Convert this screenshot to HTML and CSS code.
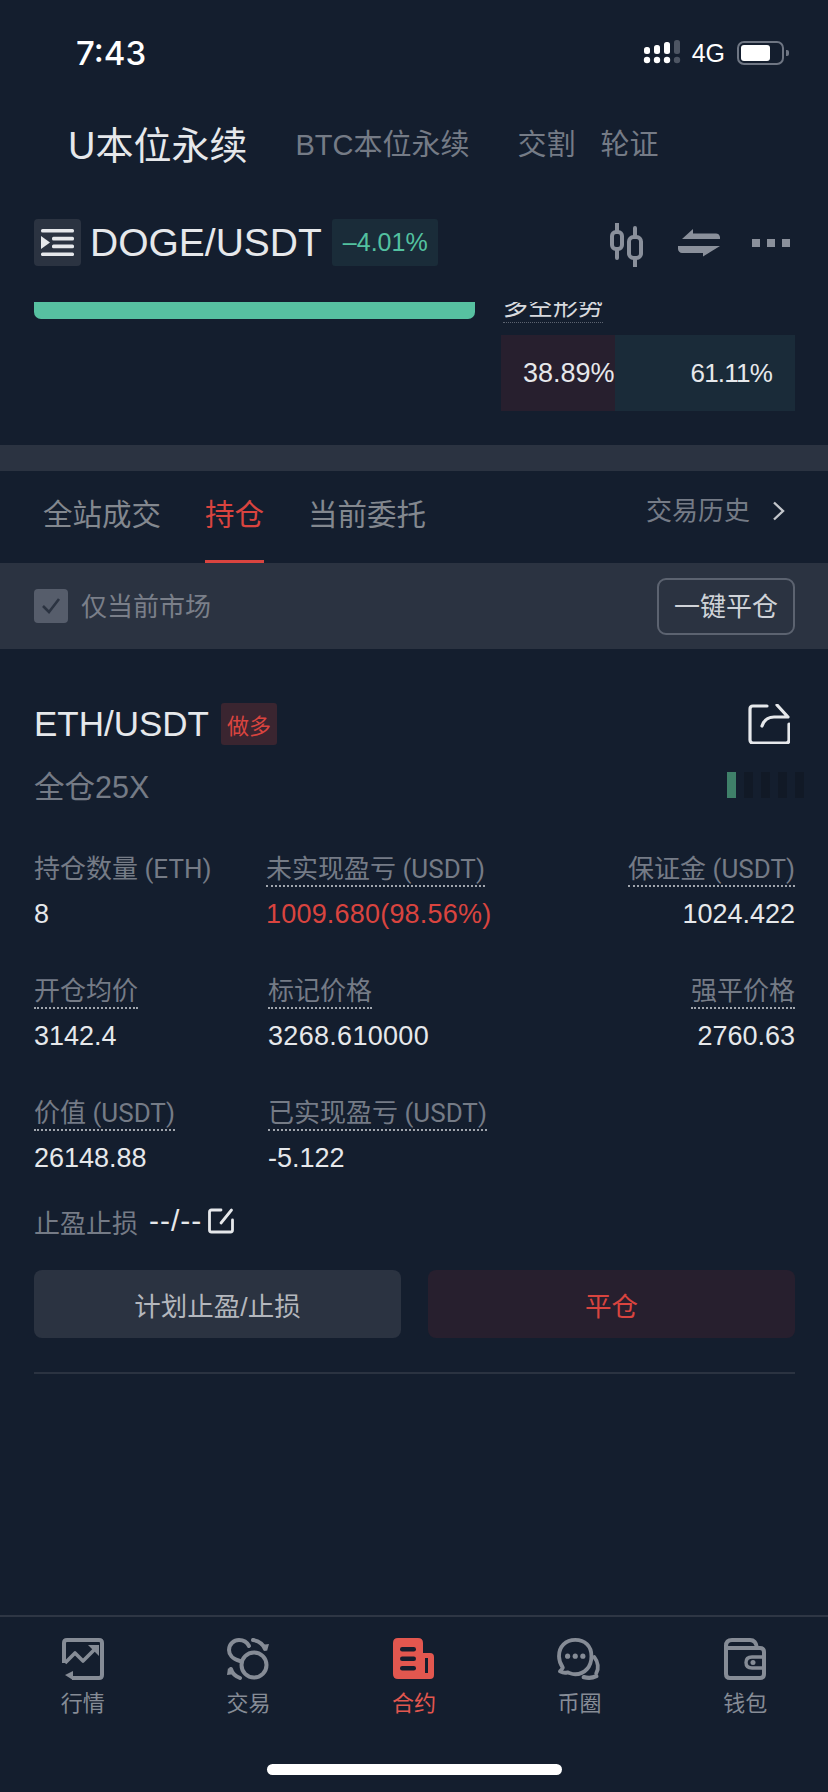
FILE: index.html
```html
<!DOCTYPE html>
<html lang="zh-CN">
<head>
    <meta charset="UTF-8">
    <meta name="viewport" content="width=device-width, initial-scale=1.0">
    <title>合约</title>
    <link rel="stylesheet" href="styles.css">
</head>
<body>
    <div class="page">
        <div class="status-bar">
            <span class="time">7:43</span>
            <div class="status-right">
                <svg class="signal" width="40" height="26" viewBox="0 0 40 26">
                    <g fill="#fff">
                        <circle cx="4" cy="20" r="3.2"/><circle cx="14" cy="20" r="3.2"/><circle cx="24" cy="20" r="3.2"/>
                        <rect x="1" y="7" width="6" height="7" rx="2.5"/><rect x="11" y="5" width="6" height="9" rx="2.5"/><rect x="21" y="2" width="6" height="12" rx="2.5"/>
                    </g>
                    <g fill="#4d5563">
                        <circle cx="34" cy="20" r="3.2"/><rect x="31" y="0" width="6" height="14" rx="2.5"/>
                    </g>
                </svg>
                <span class="network">4G</span>
                <div class="battery"><div class="battery-fill"></div></div>
                <div class="battery-nub"></div>
            </div>
        </div>

        <div class="market-tabs">
            <span class="market-tab active">U本位永续</span>
            <span class="market-tab btc">BTC本位永续</span>
            <span class="market-tab delivery">交割</span>
            <span class="market-tab option">轮证</span>
        </div>

        <div class="pair-row">
            <div class="menu-box">
                <svg width="33" height="27" viewBox="0 0 33 27" fill="#e6e8eb">
                    <rect x="0" y="0" width="33" height="3.6" rx="1.5"/>
                    <rect x="11" y="7.8" width="22" height="3.6" rx="1.5"/>
                    <rect x="11" y="15.6" width="22" height="3.6" rx="1.5"/>
                    <rect x="0" y="23.4" width="33" height="3.6" rx="1.5"/>
                    <path d="M0 7l9 6.5L0 20z"/>
                </svg>
            </div>
            <span class="pair-name">DOGE/USDT</span>
            <span class="pair-change">–4.01%</span>
            <div class="pair-actions">
                <svg class="candles" width="34" height="44" viewBox="0 0 34 44" fill="none" stroke="#8a909b" stroke-width="4">
                    <path d="M7 0v9M7 26v9M25 5v9M25 35v9" stroke-linecap="round"/>
                    <rect x="2" y="9" width="10" height="17" rx="4"/>
                    <rect x="19" y="14" width="12" height="21" rx="4.5"/>
                </svg>
                <svg class="swap" width="42" height="28" viewBox="0 0 42 28" fill="#8a909b">
                    <path d="M15 0v4.500h23c2 0 3.500 1 4 3.500v2H4z"/>
                    <path d="M0 17h42L25 27.500V24H4c-2 0-4-2-4-4z"/>
                </svg>
                <div class="dots"><i></i><i></i><i></i></div>
            </div>
        </div>

        <div class="depth">
            <div class="depth-bar"></div>
            <div class="sentiment">
                <div class="sentiment-title"><span>多空形势</span></div>
                <div class="ratio">
                    <div class="ratio-long">38.89%</div>
                    <div class="ratio-short">61.11%</div>
                </div>
            </div>
        </div>

        <div class="band"></div>

        <div class="record-tabs">
            <span class="record-tab">全站成交</span>
            <span class="record-tab active">持仓</span>
            <span class="record-tab">当前委托</span>
            <div class="history">
                <span>交易历史</span>
                <svg width="13" height="20" viewBox="0 0 13 20" fill="none" stroke="#c3c6cb" stroke-width="2.4"><path d="M2 1.500l9 8.500-9 8.500"/></svg>
            </div>
        </div>

        <div class="filter-bar">
            <div class="check-box">
                <svg width="20" height="18" viewBox="0 0 20 18" fill="none" stroke="#2b3341" stroke-width="2.6"><path d="M2 9l6 6L18 2"/></svg>
            </div>
            <span class="filter-label">仅当前市场</span>
            <button class="close-all">一键平仓</button>
        </div>

        <div class="position">
            <div class="pos-head">
                <span class="pos-name">ETH/USDT</span>
                <span class="pos-tag">做多</span>
                <svg class="share" width="42" height="40" viewBox="0 0 42 40" fill="none" stroke="#e6e8eb" stroke-width="3.2" stroke-linejoin="round" stroke-linecap="round">
                    <path d="M19 2H5Q2 2 2 5v31q0 3 3 3h33q3 0 3-3V20"/>
                    <path d="M29 1l11 12H26q-9 0-12 9"/>
                </svg>
            </div>
            <div class="pos-meta">
                <span class="leverage">全仓25X</span>
                <div class="risk-bars"><i class="on"></i><i></i><i></i><i></i><i></i></div>
            </div>

            <div class="pos-grid">
                <div class="cell">
                    <span class="cell-label plain">持仓数量 (ETH)</span>
                    <span class="cell-value">8</span>
                </div>
                <div class="cell">
                    <span class="cell-label">未实现盈亏 (USDT)</span>
                    <span class="cell-value red">1009.680(98.56%)</span>
                </div>
                <div class="cell right">
                    <span class="cell-label">保证金 (USDT)</span>
                    <span class="cell-value">1024.422</span>
                </div>
                <div class="cell">
                    <span class="cell-label">开仓均价</span>
                    <span class="cell-value">3142.4</span>
                </div>
                <div class="cell nudge">
                    <span class="cell-label">标记价格</span>
                    <span class="cell-value wide">3268.610000</span>
                </div>
                <div class="cell right">
                    <span class="cell-label">强平价格</span>
                    <span class="cell-value">2760.63</span>
                </div>
                <div class="cell">
                    <span class="cell-label">价值 (USDT)</span>
                    <span class="cell-value">26148.88</span>
                </div>
                <div class="cell nudge">
                    <span class="cell-label">已实现盈亏 (USDT)</span>
                    <span class="cell-value">-5.122</span>
                </div>
            </div>

            <div class="stop-row">
                <span class="stop-label">止盈止损</span>
                <span class="stop-value">--/--</span>
                <svg width="26" height="26" viewBox="0 0 26 26" fill="none" stroke="#e6e8eb" stroke-width="2.800" stroke-linecap="round" stroke-linejoin="round">
                    <path d="M13 2H3.500Q1.500 2 1.500 4v18q0 2 2 2h19q2 0 2-2V12"/>
                    <path d="M23.500 2L13 15"/>
                </svg>
            </div>

            <div class="pos-buttons">
                <button class="btn-plan">计划止盈/止损</button>
                <button class="btn-close">平仓</button>
            </div>
            <div class="pos-line"></div>
        </div>

        <div class="tab-bar">
            <div class="tab-items">
                <div class="tab-item">
                    <svg width="42" height="42" viewBox="0 0 42 42" fill="none" stroke="#868c96" stroke-width="4" stroke-linejoin="round">
                        <path d="M2 25V5q0-3 3-3h32q3 0 3 3v32q0 3-3 3H10"/>
                        <path d="M3 25l10-10 8 8 13-13" stroke-width="3.600"/>
                        <path d="M26 7h11v11z" fill="#868c96" stroke="none"/>
                        <path d="M11 33l-8 4 8 5z" fill="#868c96" stroke="none"/>
                    </svg>
                    <span>行情</span>
                </div>
                <div class="tab-item">
                    <svg width="44" height="42" viewBox="0 0 44 42" fill="none" stroke="#868c96" stroke-width="4" stroke-linecap="round">
                        <circle cx="28" cy="27" r="12.500"/>
                        <path d="M14 23C6 21 3 16 3 12 3 6 8 2 13 2c5 0 8 2 10 6"/>
                        <path d="M27 2c6 1 10 4 12 9"/>
                        <path d="M35 7l6 6 2-7z" fill="#868c96" stroke="none"/>
                        <path d="M14 40c-5-2-8-5-9-9"/>
                        <path d="M9 36l-7-6-1 7z" fill="#868c96" stroke="none"/>
                    </svg>
                    <span>交易</span>
                </div>
                <div class="tab-item active">
                    <svg width="42" height="42" viewBox="0 0 42 42">
                        <path fill="#e2574f" d="M5 0h20q5 0 5 5v10h7q4 0 4 4v18q0 4-4 4H5q-5 0-5-5V5q0-5 5-5z"/>
                        <g fill="#141e2e">
                            <rect x="7" y="9" width="16" height="4.500" rx="2.200"/>
                            <rect x="7" y="18.500" width="16" height="4.500" rx="2.200"/>
                            <rect x="7" y="28" width="16" height="4.500" rx="2.200"/>
                            <rect x="32" y="20" width="3" height="15"/>
                        </g>
                    </svg>
                    <span>合约</span>
                </div>
                <div class="tab-item">
                    <svg width="48" height="44" viewBox="0 0 48 44" fill="none" stroke="#868c96" stroke-width="4" stroke-linecap="round" stroke-linejoin="round">
                        <path d="M19 2C9 2 2 9 2 19c0 5 2 9 4 12-1 2-2 3-3 4 2 1 5 2 8 1 3 1 5 2 8 2 10 0 17-8 17-19S29 2 19 2z"/>
                        <path d="M39 20c4 5 5 12 2 17"/>
                        <path d="M28 41c4 1 9 1 13-1" stroke-width="4.500"/>
                        <g fill="#868c96" stroke="none"><circle cx="11" cy="19" r="2.700"/><circle cx="19" cy="19" r="2.700"/><circle cx="27" cy="19" r="2.700"/></g>
                    </svg>
                    <span>币圈</span>
                </div>
                <div class="tab-item">
                    <svg width="42" height="42" viewBox="0 0 42 42" fill="none" stroke="#868c96" stroke-width="4" stroke-linejoin="round">
                        <path d="M2 8q0-6 6-6h18q6 0 7 8"/>
                        <path d="M2 8v28q0 4 4 4h30q4 0 4-4V14q0-4-4-4H6q-4 0-4-2"/>
                        <path d="M40 19H28q-6 0-6 5.500T28 30h12" stroke-width="3.400"/>
                        <circle cx="29" cy="24.500" r="2.500" fill="#868c96" stroke="none"/>
                    </svg>
                    <span>钱包</span>
                </div>
            </div>
            <div class="home-bar"></div>
        </div>
    </div>
</body>
</html>
```

FILE: styles.css
```css
* {
    box-sizing: border-box;
}

body {
    margin: 0;
    background-color: #141e2e;
    font-family: "Liberation Sans", "Noto Sans CJK SC", sans-serif;
    color: #e6e8eb;
}

.page {
    display: flex;
    flex-direction: column;
    width: 828px;
    height: 1792px;
    overflow: hidden;
}

/* status bar */
.status-bar {
    display: flex;
    justify-content: space-between;
    align-items: center;
    height: 106px;
    padding: 0 39px 0 76px;
}

.time {
    font-family: Inter, sans-serif;
    font-size: 33px;
    font-weight: 500;
    color: #fff;
}

.status-right {
    display: flex;
    align-items: center;
}

.signal {
    margin-right: 9px;
}

.network {
    font-size: 25px;
    color: #fff;
    margin-right: 12px;
}

.battery {
    width: 47px;
    height: 24px;
    padding: 2px;
    border: 2px solid #6f7683;
    border-radius: 7px;
}

.battery-fill {
    width: 29px;
    height: 16px;
    background-color: #fff;
    border-radius: 3px;
}

.battery-nub {
    width: 3px;
    height: 6px;
    margin-left: 2px;
    background-color: #6f7683;
    border-radius: 0 2px 2px 0;
}

/* market tabs */
.market-tabs {
    display: flex;
    align-items: center;
    height: 72px;
    padding-left: 68px;
}

.market-tab {
    font-size: 29px;
    color: #757b86;
}

.market-tab.active {
    font-size: 38px;
    color: #e6e8eb;
}

.market-tab.btc {
    margin-left: 48px;
}

.market-tab.delivery {
    margin-left: 48px;
}

.market-tab.option {
    margin-left: 25px;
}

/* pair row */
.pair-row {
    display: flex;
    align-items: center;
    height: 47px;
    margin-top: 41px;
    padding: 0 38px 0 34px;
}

.menu-box {
    display: flex;
    justify-content: center;
    align-items: center;
    width: 47px;
    height: 47px;
    background-color: #2b3341;
    border-radius: 4px;
}

.pair-name {
    margin-left: 9px;
    font-size: 39px;
    color: #e6e8eb;
}

.pair-change {
    display: flex;
    align-items: center;
    height: 47px;
    margin-left: 10px;
    padding: 0 10px 0 11px;
    background-color: #1a2c39;
    border-radius: 3px;
    font-size: 25px;
    color: #53c1a0;
}

.pair-actions {
    display: flex;
    align-items: center;
    margin-left: auto;
}

.candles {
    margin-top: 4px;
}

.swap {
    margin: 0 32px 0 34px;
}

.dots {
    display: flex;
    gap: 7px;
}

.dots i {
    width: 8px;
    height: 8px;
    background-color: #8a909b;
}

/* clipped long/short block */
.depth {
    display: flex;
    justify-content: space-between;
    height: 143px;
    margin-top: 36px;
    padding: 0 33px 0 34px;
    overflow: hidden;
}

.depth-bar {
    width: 441px;
    height: 17px;
    background-color: #57c1a1;
    border-radius: 0 0 7px 7px;
}

.sentiment {
    width: 294px;
}

.sentiment-title {
    height: 33px;
    margin-top: -12px;
    padding-left: 2px;
}

.sentiment-title span {
    display: inline-block;
    height: 33px;
    line-height: 33px;
    font-size: 25px;
    color: #d8dade;
    border-bottom: 1px dotted #5c6370;
}

.ratio {
    display: flex;
    height: 76px;
    margin-top: 12px;
    line-height: 76px;
}

.ratio-long {
    width: 114px;
    padding-left: 22px;
    background-color: #271f2e;
    font-size: 27px;
    white-space: nowrap;
}

.ratio-short {
    flex: 1;
    padding-right: 23px;
    background-color: #1a2b39;
    font-size: 26px;
    letter-spacing: -0.8px;
    text-align: right;
}

.band {
    height: 26px;
    background-color: #2b3341;
}

/* record tabs */
.record-tabs {
    display: flex;
    align-items: flex-start;
    height: 92px;
    padding: 0 43px;
}

.record-tab {
    height: 92px;
    margin-right: 44px;
    padding-top: 23px;
    font-size: 29.500px;
    line-height: 42px;
    color: #83888f;
}

.record-tab.active {
    color: #d9443f;
    border-bottom: 3px solid #d9443f;
}

.history {
    display: flex;
    align-items: center;
    margin-left: auto;
    margin-top: 21px;
    font-size: 26px;
    line-height: 38px;
    color: #757b86;
}

.history svg {
    margin-left: 22px;
}

/* filter */
.filter-bar {
    display: flex;
    align-items: center;
    height: 86px;
    padding: 0 33px 0 34px;
    background-color: #2b3341;
}

.check-box {
    display: flex;
    justify-content: center;
    align-items: center;
    width: 34px;
    height: 34px;
    background-color: #565d6b;
    border-radius: 4px;
}

.filter-label {
    margin-left: 13px;
    padding-bottom: 4px;
    font-size: 26px;
    color: #7a7f89;
}

.close-all {
    width: 138px;
    height: 57px;
    margin-left: auto;
    padding: 0 0 4px;
    background: none;
    border: 2px solid #5c6370;
    border-radius: 9px;
    font-family: inherit;
    font-size: 26px;
    color: #d0d3d8;
}

/* position card */
.position {
    flex: 1;
    padding: 54px 33px 0 34px;
}

.pos-head {
    display: flex;
    align-items: center;
    height: 42px;
}

.pos-name {
    font-size: 35px;
    color: #e6e8eb;
}

.pos-tag {
    display: flex;
    align-items: center;
    height: 42px;
    margin-left: 12px;
    padding: 0 6px;
    background-color: #3a2530;
    border-radius: 3px;
    font-size: 22px;
    color: #d9443f;
}

.share {
    margin-left: auto;
    margin-right: 5px;
}

.pos-meta {
    display: flex;
    justify-content: space-between;
    align-items: center;
    height: 32px;
    margin-top: 24px;
}

.leverage {
    font-size: 30.500px;
    color: #757b86;
}

.risk-bars {
    display: flex;
    gap: 8px;
    margin-right: -9px;
}

.risk-bars i {
    width: 9px;
    height: 26px;
    background-color: #111926;
}

.risk-bars i.on {
    background-color: #3f8069;
}

.pos-grid {
    display: grid;
    grid-template-columns: 232px 1fr auto;
    row-gap: 46px;
    margin-top: 53px;
}

.cell {
    display: flex;
    flex-direction: column;
    align-items: flex-start;
    gap: 11px;
}

.cell.nudge {
    margin-left: 2px;
}

.cell.right {
    align-items: flex-end;
}

.cell-label {
    height: 33px;
    line-height: 31px;
    font-family: Roboto, "Noto Sans CJK SC", sans-serif;
    font-size: 26px;
    color: #757b86;
    border-bottom: 2px dotted #a0a5ad;
    white-space: nowrap;
}

.cell-label.plain {
    border-bottom: none;
}

.cell-value {
    height: 32px;
    line-height: 32px;
    font-size: 27px;
    color: #e6e8eb;
}

.cell-value.red {
    letter-spacing: 0.2px;
    color: #d9443f;
}

.cell-value.wide {
    letter-spacing: 0.3px;
}

.stop-row {
    display: flex;
    align-items: center;
    height: 32px;
    margin-top: 31px;
}

.stop-label {
    font-size: 26px;
    color: #757b86;
}

.stop-value {
    margin: 0 6px 0 11px;
    font-size: 30px;
    letter-spacing: 1px;
    color: #e6e8eb;
}

.pos-buttons {
    display: flex;
    gap: 27px;
    margin-top: 33px;
}

.pos-buttons button {
    flex: 1;
    height: 68px;
    border: none;
    border-radius: 8px;
    font-family: inherit;
    font-size: 26.500px;
}

.btn-plan {
    background-color: #2b3341;
    color: #b4b7bd;
}

.btn-close {
    background-color: #271f2e;
    color: #d9443f;
}

.pos-line {
    height: 2px;
    margin-top: 34px;
    background-color: #2b3341;
}

/* bottom tabs */
.tab-bar {
    border-top: 2px solid #2e3644;
    padding-top: 21px;
}

.tab-items {
    display: flex;
}

.tab-item {
    display: flex;
    flex: 1;
    flex-direction: column;
    align-items: center;
    gap: 11px;
    font-size: 22px;
    line-height: 26px;
    color: #868c96;
}

.tab-item svg {
    height: 42px;
}

.tab-item.active {
    color: #e2574f;
}

.home-bar {
    width: 295px;
    height: 11px;
    margin: 47px auto 17px;
    background-color: #fff;
    border-radius: 6px;
}
```
